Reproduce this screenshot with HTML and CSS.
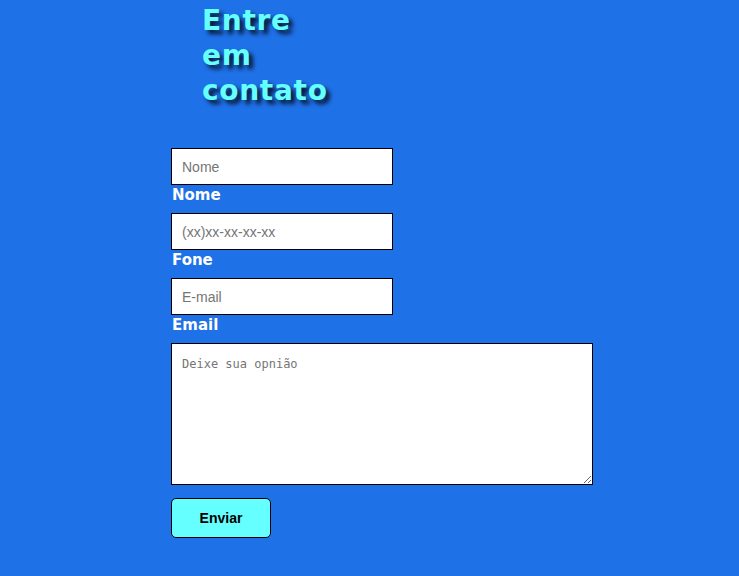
FILE: index.html
```html
<!DOCTYPE html>
<html lang="pt">
<head>
<meta charset="utf-8">
<title>Entre em contato</title>
<link rel="stylesheet" href="styles.css">
</head>
<body>
<main class="page">
  <h1 class="title">Entre<br>em<br>contato</h1>
  <form class="contact">
    <input class="field" type="text" id="nome" placeholder="Nome">
    <label class="label" for="nome">Nome</label>
    <input class="field" type="text" id="fone" placeholder="(xx)xx-xx-xx-xx">
    <label class="label" for="fone">Fone</label>
    <input class="field" type="email" id="email" placeholder="E-mail">
    <label class="label" for="email">Email</label>
    <textarea class="message" placeholder="Deixe sua opnião"></textarea>
    <button class="send" type="button">Enviar</button>
  </form>
</main>
</body>
</html>
```
FILE: styles.css
```css
html, body {
  margin: 0;
  padding: 0;
  background: #1f71e8;
}
.page {
  padding: 3px 0 0 171px;
  min-height: 576px;
  box-sizing: border-box;
}
.title {
  margin: 0 0 40px 31px;
  font-family: "DejaVu Sans", Verdana, sans-serif;
  font-weight: bold;
  font-size: 28px;
  line-height: 35px;
  letter-spacing: 0.7px;
  color: #66ffff;
  text-shadow: 4px 4px 4px #081530;
}
.contact {
  display: flex;
  flex-direction: column;
  align-items: flex-start;
}
.field {
  box-sizing: border-box;
  width: 222px;
  height: 37px;
  margin: 0;
  padding: 0 10px;
  border: 1px solid #000;
  background: #fff;
  font-family: "Liberation Sans", Arial, sans-serif;
  font-size: 14px;
  color: #000;
  outline: none;
}
.field::placeholder {
  color: #757575;
}
.label {
  display: block;
  padding: 2px 0 0 1px;
  font-family: "DejaVu Sans", Verdana, sans-serif;
  font-weight: bold;
  font-size: 15px;
  line-height: 16px;
  color: #fff;
  margin-bottom: 10px;
}
.message {
  box-sizing: border-box;
  width: 422px;
  height: 142px;
  margin: 0 0 13px 0;
  padding: 13px 10px 10px;
  border: 1px solid #000;
  background: #fff;
  font-family: "DejaVu Sans Mono", monospace;
  font-size: 12px;
  line-height: 15px;
  resize: both;
}
.message::placeholder {
  color: #757575;
}
.send {
  box-sizing: border-box;
  width: 100px;
  height: 40px;
  margin: 0;
  border: 1px solid #000;
  border-radius: 5px;
  background: #66ffff;
  font-family: "Liberation Sans", Arial, sans-serif;
  font-weight: bold;
  font-size: 14px;
  color: #000;
  cursor: pointer;
}
```
